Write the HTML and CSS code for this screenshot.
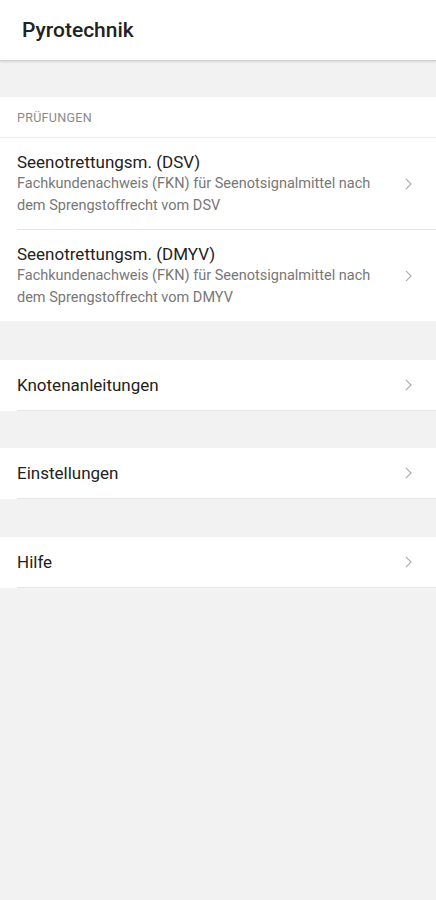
FILE: index.html
```html
<!DOCTYPE html>
<html lang="de">
<head>
<meta charset="utf-8">
<link rel="stylesheet" href="styles.css">
</head>
<body>
<header class="appbar"><h1 class="appbar-title">Pyrotechnik</h1></header>
<main class="content">
  <section class="group group-first">
    <div class="group-header">PRÜFUNGEN</div>
    <a class="row row-two">
      <div class="row-text">
        <div class="row-title">Seenotrettungsm. (DSV)</div>
        <div class="row-sub">Fachkundenachweis (FKN) für Seenotsignalmittel nach dem Sprengstoffrecht vom DSV</div>
      </div>
      <svg class="chev" viewBox="0 0 8 14"><path d="M1 1l6 6-6 6"/></svg>
    </a>
    <a class="row row-two row-last">
      <div class="row-text">
        <div class="row-title">Seenotrettungsm. (DMYV)</div>
        <div class="row-sub">Fachkundenachweis (FKN) für Seenotsignalmittel nach dem Sprengstoffrecht vom DMYV</div>
      </div>
      <svg class="chev" viewBox="0 0 8 14"><path d="M1 1l6 6-6 6"/></svg>
    </a>
  </section>
  <section class="group group-gap-l">
    <a class="row">
      <div class="row-title">Knotenanleitungen</div>
      <svg class="chev" viewBox="0 0 8 14"><path d="M1 1l6 6-6 6"/></svg>
    </a>
  </section>
  <section class="group group-gap-s">
    <a class="row">
      <div class="row-title">Einstellungen</div>
      <svg class="chev" viewBox="0 0 8 14"><path d="M1 1l6 6-6 6"/></svg>
    </a>
  </section>
  <section class="group group-gap-m">
    <a class="row">
      <div class="row-title">Hilfe</div>
      <svg class="chev" viewBox="0 0 8 14"><path d="M1 1l6 6-6 6"/></svg>
    </a>
  </section>
</main>
</body>
</html>
```
FILE: styles.css
```css
html, body {
  margin: 0;
  padding: 0;
  background: #f2f2f2;
  font-family: Roboto, "Noto Sans", sans-serif;
  min-height: 900px;
}
.appbar {
  height: 60px;
  background: #fff;
  border-bottom: 1px solid #d0d0d0;
  box-shadow: 0 1px 2px rgba(0,0,0,0.12);
  display: flex;
  align-items: center;
  padding-left: 22px;
  position: relative;
}
.appbar-title {
  margin: 0;
  font-size: 21px;
  font-weight: 500;
  color: #222;
}
.content {
  display: flex;
  flex-direction: column;
}
.group {
  background: #fff;
}
.group-first {
  margin-top: 36px;
}
.group-gap-l {
  margin-top: 39px;
}
.group-gap-s {
  margin-top: 37px;
}
.group-gap-m {
  margin-top: 38px;
}
.group-header {
  height: 40px;
  border-bottom: 1px solid #ebebeb;
  display: flex;
  align-items: center;
  padding-left: 17px;
  font-size: 12.5px;
  letter-spacing: 0.3px;
  color: #8a8a8a;
}
.row {
  display: flex;
  align-items: center;
  justify-content: space-between;
  min-height: 50px;
  margin-left: 17px;
  padding-right: 24px;
  border-bottom: 1px solid #e6e6e6;
  color: #212121;
}
.row-two {
  padding: 13px 24px 12px 0;
  min-height: 0;
}
.row-last {
  border-bottom: none;
}
.row-text {
  flex: 1;
  padding-right: 14px;
}
.row-title {
  font-size: 17px;
  line-height: 22px;
  color: #222;
}
.row-sub {
  font-size: 14.5px;
  line-height: 22px;
  color: #777;
}
.chev {
  width: 7px;
  height: 12px;
  flex: none;
  fill: none;
  stroke: #ababab;
  stroke-width: 1.3;
}
```
